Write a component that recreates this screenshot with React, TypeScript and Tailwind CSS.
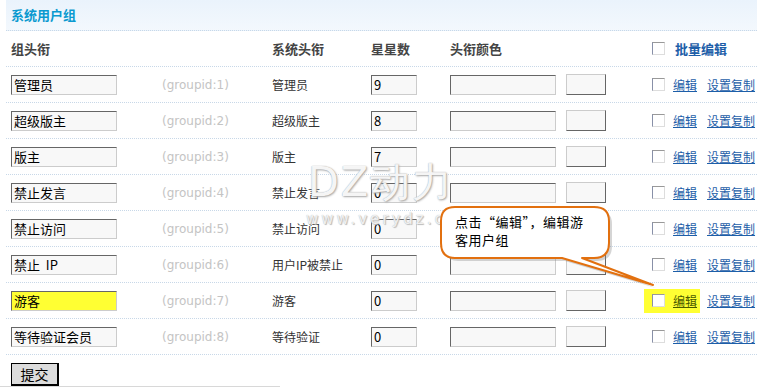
import React from 'react';

const groups = [
  { name: '管理员', id: 1, sys: '管理员', stars: '9' },
  { name: '超级版主', id: 2, sys: '超级版主', stars: '8' },
  { name: '版主', id: 3, sys: '版主', stars: '7' },
  { name: '禁止发言', id: 4, sys: '禁止发言', stars: '0' },
  { name: '禁止访问', id: 5, sys: '禁止访问', stars: '0' },
  { name: '禁止  IP', id: 6, sys: '用户IP被禁止', stars: '0' },
  { name: '游客', id: 7, sys: '游客', stars: '0', hl: true },
  { name: '等待验证会员', id: 8, sys: '等待验证', stars: '0' },
];

const cn = "font-['Noto_Sans_CJK_SC','Noto_Sans',sans-serif]";

const Box = ({ w, value, yellow }: { w: string; value?: string; yellow?: boolean }) => (
  <div
    className={`${w} h-[20px] border border-t-[#666] border-l-[#666] border-r-[#ccc] border-b-[#ccc] pl-[2px] text-[13px] leading-[18px] text-black whitespace-pre ${yellow ? 'bg-[#ffff33]' : 'bg-[#f8f8f8]'}`}
  >
    {value}
  </div>
);

const Check = () => (
  <div className="w-[13px] h-[13px] border border-t-[#999] border-l-[#8890a8] border-r-[#ddd] border-b-[#ddd] bg-white" />
);

export default function App() {
  return (
    <div className={`relative w-[757px] h-[389px] bg-white overflow-hidden ${cn} text-[#333]`}>
      <div className="ml-[6px]">
        {/* title */}
        <div className="h-[31px] flex items-center pl-[5px] bg-gradient-to-b from-[#eaf3fc] to-[#f3f8fd] border-b border-dotted border-[#c8d8e8]">
          <span className="text-[13px] font-bold text-[#0b9ad0]">系统用户组</span>
        </div>

        {/* header */}
        <div className="h-[36px] flex items-center pl-[5px] border-b border-dotted border-[#c8d8e8] text-[13px] font-bold text-[#444]">
          <div className="w-[261px]">组头衔</div>
          <div className="w-[99px]">系统头衔</div>
          <div className="w-[79px]">星星数</div>
          <div className="w-[202px]">头衔颜色</div>
          <Check />
          <span className="ml-[10px] text-[#1d5ea8]">批量编辑</span>
        </div>

        {groups.map((g) => (
          <div key={g.id} className="h-[36px] flex items-center pl-[5px] border-b border-dotted border-[#c8d8e8] text-[12px]">
            <div className="w-[151px]">
              <Box w="w-[106px]" value={g.name} yellow={g.hl} />
            </div>
            <div className="w-[110px] font-['DejaVu_Sans',sans-serif] text-[12px] text-[#c4c4c4]">(groupid:{g.id})</div>
            <div className="w-[99px]">{g.sys}</div>
            <div className="w-[79px]">
              <Box w="w-[46px]" value={g.stars} />
            </div>
            <div className="w-[116px]">
              <Box w="w-[106px]" />
            </div>
            <div className="w-[78px]">
              <div className="w-[40px] h-[21px] border border-t-[#ccc] border-l-[#ccc] border-r-[#666] border-b-[#666] bg-[#f8f8f8]" />
            </div>
            <div className={`flex items-center h-[24px] pl-[8px] pr-[3px] ${g.hl ? 'bg-[#ffff33]' : ''}`}>
              <Check />
              <a className={`ml-[8px] underline ${g.hl ? 'text-[#4a5a00]' : 'text-[#1d5ea8]'}`}>编辑</a>
            </div>
            <a className="ml-[7px] underline text-[#1d5ea8]">设置复制</a>
          </div>
        ))}

        <div className="pl-[5px] pt-[8px]">
          <button className="block w-[48px] h-[23px] bg-[#dcdcdc] border border-black border-r-2 border-b-2 text-[14px] text-black leading-none">
            提交
          </button>
        </div>
      </div>
      <div className="w-[280px] h-px bg-[#d8d8d8]" />

      {/* watermark */}
      <div className="absolute left-[308px] top-[162px] text-[40px] leading-none text-white/90 font-['DejaVu_Sans',sans-serif] tracking-[2px] [text-shadow:0_0_1px_#999,1px_1px_2px_#aaa]">
        DZ动力
      </div>
      <div className="absolute left-[306px] top-[212px] text-[15px] leading-none text-white/80 font-['DejaVu_Sans',sans-serif] tracking-[3px] [text-shadow:0_0_1px_#aaa,1px_1px_1px_#bbb]">
        www.verydz.com
      </div>

      {/* callout */}
      <svg className="absolute left-0 top-0" width="757" height="389" viewBox="0 0 757 389">
        <path
          d="M455 207 H594 Q609 207 609 221 V243 Q609 258 594 258 H582 L653 285 L562 258 H455 Q441 258 441 243 V221 Q441 207 455 207 Z"
          fill="#888"
          opacity="0.35"
          transform="translate(3 3)"
        />
        <path
          d="M455 207 H594 Q609 207 609 221 V243 Q609 258 594 258 H582 L653 285 L562 258 H455 Q441 258 441 243 V221 Q441 207 455 207 Z"
          fill="#fff"
          stroke="#e2700f"
          strokeWidth="2"
          strokeLinejoin="round"
        />
      </svg>
      <div className="absolute left-[455px] top-[213px] w-[150px] text-[13px] leading-[18px] tracking-[0.5px] text-black">
        点击“编辑”，编辑游<br />客用户组
      </div>
    </div>
  );
}
